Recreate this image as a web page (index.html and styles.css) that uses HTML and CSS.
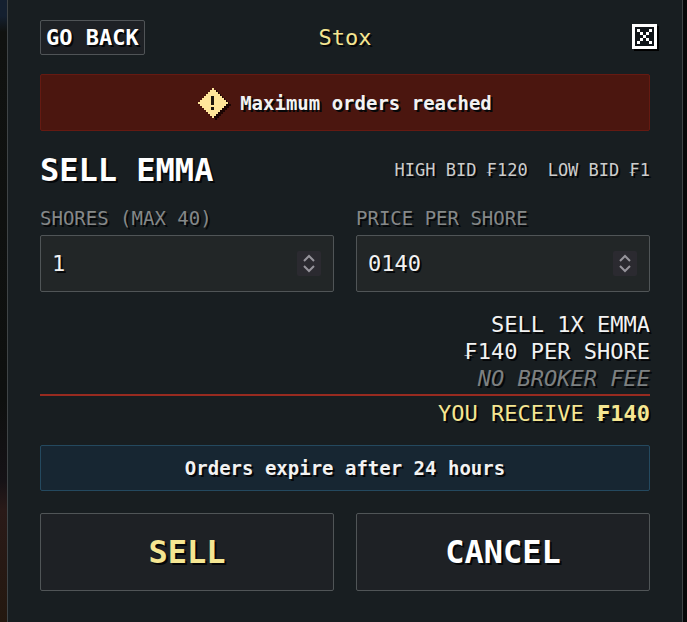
FILE: index.html
```
<!DOCTYPE html>
<html lang="en">
<head>
<meta charset="utf-8">
<meta name="viewport" content="width=device-width, initial-scale=1">
<title>Stox</title>
<link rel="stylesheet" href="styles.css">
</head>
<body>
<main class="panel">
  <header class="header">
    <button class="back" type="button">GO BACK</button>
    <h1 class="app-name">Stox</h1>
    <button class="close" type="button" aria-label="Close">
      <svg class="close-icon" viewBox="0 0 27 27" shape-rendering="crispEdges" aria-hidden="true">
        <path fill="#000" d="M2 2h25v25H2z"/>
        <path fill="#fff" d="M0 0h25v25H0z"/>
        <path fill="#101519" d="M3 3h19v19H3z"/>
        <path fill="#fff" d="M5 5h3v3H5zM8 8h3v3H8zM11 11h3v3h-3zM14 14h3v3h-3zM17 17h3v3h-3zM17 5h3v3h-3zM14 8h3v3h-3zM8 14h3v3H8zM5 17h3v3H5z"/>
      </svg>
    </button>
  </header>

  <div class="alert" role="alert">
    <svg class="warn-icon" viewBox="0 0 34 34" shape-rendering="crispEdges" aria-hidden="true">
      <path fill="#1c0503" transform="translate(3 4)" d="M14 0h2v2h2v2h2v2h2v2h2v2h2v2h2v2h2v2h-2v2h-2v2h-2v2h-2v2h-2v2h-2v2h-2v2h-2v-2h-2v-2h-2v-2H8v-2H6v-2H4v-2H2v-2H0v-2h2v-2h2v-2h2V8h2V6h2V4h2V2h2z"/>
      <path fill="#ffe69a" transform="translate(0 2)" d="M14 0h2v2h2v2h2v2h2v2h2v2h2v2h2v2h2v2h-2v2h-2v2h-2v2h-2v2h-2v2h-2v2h-2v2h-2v-2h-2v-2h-2v-2H8v-2H6v-2H4v-2H2v-2H0v-2h2v-2h2v-2h2V8h2V6h2V4h2V2h2z"/>
      <path fill="#1d160e" d="M13 10h3v9h-3zM13 21h3v3h-3z"/>
    </svg>
    <span>Maximum orders reached</span>
  </div>

  <div class="title-row">
    <h2 class="title">SELL EMMA</h2>
    <div class="bids"><span>HIGH BID ₣120</span><span>LOW BID ₣1</span></div>
  </div>

  <form class="order">
    <div class="columns">
      <div class="field">
        <label class="label" for="shores">SHORES (MAX 40)</label>
        <div class="box">
          <input class="input" id="shores" type="number" min="1" max="40" value="1">
          <div class="stepper">
            <button class="step" type="button" aria-label="More shores"><svg class="chevron" viewBox="0 0 12 6" aria-hidden="true"><path d="M1 6l5-5 5 5"/></svg></button>
            <button class="step" type="button" aria-label="Fewer shores"><svg class="chevron" viewBox="0 0 12 6" aria-hidden="true"><path d="M1 0l5 5 5-5"/></svg></button>
          </div>
        </div>
      </div>
      <div class="field">
        <label class="label" for="price">PRICE PER SHORE</label>
        <div class="box">
          <input class="input" id="price" type="number" min="1" value="0140">
          <div class="stepper">
            <button class="step" type="button" aria-label="Raise price"><svg class="chevron" viewBox="0 0 12 6" aria-hidden="true"><path d="M1 6l5-5 5 5"/></svg></button>
            <button class="step" type="button" aria-label="Lower price"><svg class="chevron" viewBox="0 0 12 6" aria-hidden="true"><path d="M1 0l5 5 5-5"/></svg></button>
          </div>
        </div>
      </div>
    </div>

    <div class="summary">
      <p class="line">SELL 1X EMMA</p>
      <p class="line">₣140 PER SHORE</p>
      <p class="line fee">NO BROKER FEE</p>
      <p class="line total">YOU RECEIVE <strong>₣140</strong></p>
    </div>

    <p class="info">Orders expire after 24 hours</p>

    <div class="columns">
      <button class="action sell" type="submit">SELL</button>
      <button class="action" type="button">CANCEL</button>
    </div>
  </form>
</main>
</body>
</html>
```
FILE: styles.css
```
* {
  box-sizing: border-box;
}

body {
  margin: 0;
  min-height: 100vh;
  padding: 0 4px 0 7px;
  background:
    linear-gradient(90deg, transparent 50%, #070809 50%),
    linear-gradient(#142030 0, #142030 16px, #101210 32px, #0e100f 400px, #151216 480px, #2a1a18 510px, #24180f 100%);
  color: #f2f2f2;
  font-family: "DejaVu Sans Mono", monospace;
  font-size: 22px;
  text-shadow: 2px 2px 0 #050709;
}

h1, h2, p {
  margin: 0;
}

button, input {
  font: inherit;
  color: inherit;
  text-shadow: inherit;
}

button {
  padding: 0;
  border: 0;
  background: none;
  cursor: pointer;
}

.panel {
  min-height: 100vh;
  padding: 20px 32px 31px;
  border: solid #3f4446;
  border-width: 0 1px;
  background: #181e21;
}

.header {
  display: grid;
  grid-template-columns: 1fr auto 1fr;
  align-items: center;
}

.back {
  justify-self: start;
  height: 35px;
  padding: 0 5px;
  border: 1px solid #505457;
  border-radius: 2px;
  background: #1e2125;
  color: #fff;
  font-weight: 700;
}

.app-name {
  color: #f5e692;
  font-size: 22px;
  font-weight: 400;
}

.close {
  justify-self: end;
  width: 27px;
  height: 27px;
  margin-right: -9px;
}

.close-icon {
  display: block;
}

.alert {
  display: flex;
  align-items: center;
  justify-content: center;
  gap: 8px;
  height: 57px;
  margin-top: 19px;
  border: 1px solid #651a12;
  border-radius: 2px;
  background: #4b160f;
  font-size: 19px;
  font-weight: 700;
}

.warn-icon {
  width: 34px;
  height: 34px;
}

.title-row {
  display: flex;
  align-items: center;
  justify-content: space-between;
  margin-top: 19px;
}

.title {
  color: #fff;
  font-size: 32px;
  line-height: 40px;
}

.bids {
  display: flex;
  gap: 20px;
  color: #ccc;
  font-size: 17px;
}

.columns {
  display: grid;
  grid-template-columns: repeat(2, minmax(0, 1fr));
  gap: 22px;
}

.label {
  display: block;
  margin: 16px 0 5px;
  color: #858889;
  font-size: 19px;
  line-height: 24px;
}

.box {
  display: flex;
  align-items: center;
  height: 57px;
  padding: 0 12px 0 11px;
  border: 1px solid #505557;
  border-radius: 2px;
  background: #222627;
}

.input {
  flex: 1;
  min-width: 0;
  padding: 0;
  border: 0;
  outline: 0;
  background: none;
  appearance: textfield;
}

.input::-webkit-inner-spin-button {
  display: none;
}

.stepper {
  display: flex;
  flex-direction: column;
  justify-content: center;
  gap: 5px;
  width: 24px;
  height: 25px;
  border-radius: 2px;
  background: #2b2a30;
}

.step {
  display: flex;
  justify-content: center;
}

.chevron {
  width: 12px;
  height: 6px;
  overflow: visible;
  fill: none;
  stroke: #96949b;
  stroke-width: 2;
}

.summary {
  margin-top: 19px;
  text-align: right;
}

.line {
  line-height: 27px;
}

.fee {
  color: #7d8081;
  font-style: italic;
}

.total {
  margin-top: 2px;
  padding-top: 4px;
  border-top: 2px solid #982b20;
  color: #f5e692;
}

.info {
  height: 46px;
  margin: 18px 0 22px;
  border: 1px solid #24495f;
  border-radius: 2px;
  background: #172632;
  font-size: 19px;
  font-weight: 700;
  line-height: 44px;
  text-align: center;
}

.action {
  height: 78px;
  border: 1px solid #505557;
  border-radius: 2px;
  background: #1e2125;
  color: #fff;
  font-size: 32px;
  font-weight: 700;
}

.sell {
  color: #f5e692;
}
```
